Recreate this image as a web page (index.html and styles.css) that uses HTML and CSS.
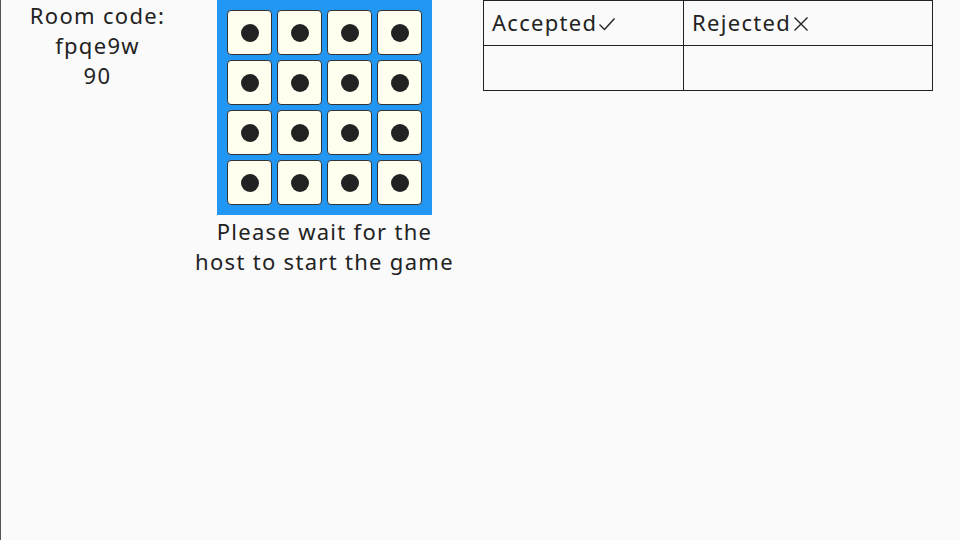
FILE: index.html
```html
<!DOCTYPE html>
<html>
<head>
<meta charset="utf-8">
<link rel="stylesheet" href="styles.css">
</head>
<body>
<div class="app">
  <div class="room">
    <div>Room code:</div>
    <div>fpqe9w</div>
    <div>90</div>
  </div>
  <div class="center">
    <div class="board">
      <div class="tile"><span class="dot"></span></div>
      <div class="tile"><span class="dot"></span></div>
      <div class="tile"><span class="dot"></span></div>
      <div class="tile"><span class="dot"></span></div>
      <div class="tile"><span class="dot"></span></div>
      <div class="tile"><span class="dot"></span></div>
      <div class="tile"><span class="dot"></span></div>
      <div class="tile"><span class="dot"></span></div>
      <div class="tile"><span class="dot"></span></div>
      <div class="tile"><span class="dot"></span></div>
      <div class="tile"><span class="dot"></span></div>
      <div class="tile"><span class="dot"></span></div>
      <div class="tile"><span class="dot"></span></div>
      <div class="tile"><span class="dot"></span></div>
      <div class="tile"><span class="dot"></span></div>
      <div class="tile"><span class="dot"></span></div>
    </div>
    <div class="wait">Please wait for the<br>host to start the game</div>
  </div>
  <table class="results">
    <colgroup><col class="c1"><col></colgroup>
    <tr>
      <th>Accepted<svg class="mark" viewBox="0 0 18 18" width="18" height="18"><path d="M1.5 9.5 L6.5 14.5 L16.5 3.5" fill="none" stroke="#222" stroke-width="1.4"/></svg></th>
      <th>Rejected<svg class="mark" viewBox="0 0 18 18" width="18" height="18"><path d="M2.5 2.5 L15.5 15.5 M15.5 2.5 L2.5 15.5" fill="none" stroke="#222" stroke-width="1.4"/></svg></th>
    </tr>
    <tr><td></td><td></td></tr>
  </table>
</div>
</body>
</html>
```
FILE: styles.css
```css
html, body {
  margin: 0;
  padding: 0;
  height: 100%;
}
body {
  background: #fafafa;
  font-family: "Noto Sans", sans-serif;
  font-size: 22px;
  letter-spacing: 1.3px;
  color: #222;
  box-shadow: inset 1px 0 0 #555;
}
.app {
  display: flex;
  align-items: flex-start;
}
.room {
  width: 195px;
  text-align: center;
  line-height: 30px;
}
.center {
  width: 259px;
  display: flex;
  flex-direction: column;
  align-items: center;
}
.board {
  background: #2196f3;
  padding: 10px;
  display: grid;
  grid-template-columns: repeat(4, 45px);
  grid-auto-rows: 45px;
  gap: 5px;
}
.tile {
  background: #fffff0;
  border: 1px solid #333;
  border-radius: 4px;
  box-sizing: border-box;
  display: flex;
  align-items: center;
  justify-content: center;
}
.dot {
  width: 18px;
  height: 18px;
  border-radius: 50%;
  background: #222;
}
.wait {
  text-align: center;
  line-height: 30px;
  margin-top: 1px;
  white-space: nowrap;
}
.results {
  margin-left: 29px;
  width: 450px;
  border-collapse: collapse;
  table-layout: fixed;
}
.results .c1 {
  width: 200px;
}
.results th, .results td {
  border: 1px solid #222;
  height: 44px;
  padding: 0 8px;
  text-align: left;
  font-weight: normal;
}
.results th {
  height: 42px;
  padding-bottom: 2px;
}
.mark {
  margin-left: 1px;
  vertical-align: -2px;
}
```
